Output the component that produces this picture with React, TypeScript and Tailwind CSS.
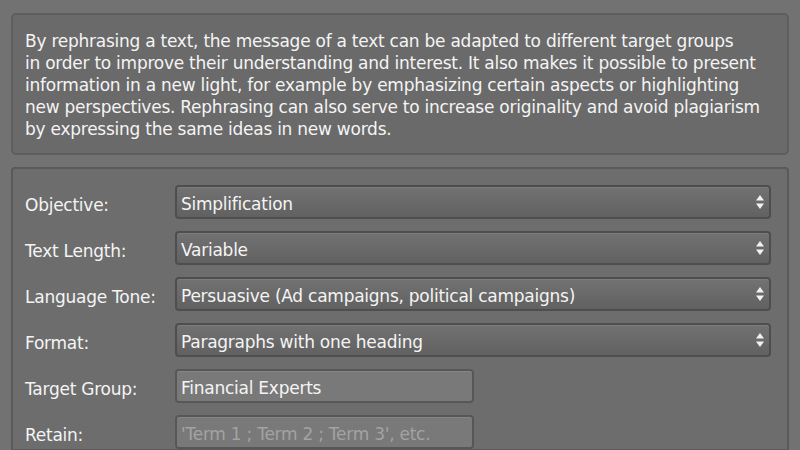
import React from 'react';

const fields = [
  { label: 'Objective:', value: 'Simplification', kind: 'select' },
  { label: 'Text Length:', value: 'Variable', kind: 'select' },
  { label: 'Language Tone:', value: 'Persuasive (Ad campaigns, political campaigns)', kind: 'select' },
  { label: 'Format:', value: 'Paragraphs with one heading', kind: 'select' },
  { label: 'Target Group:', value: 'Financial Experts', kind: 'input' },
  { label: 'Retain:', value: '', placeholder: "'Term 1 ; Term 2 ; Term 3', etc.", kind: 'input' },
];

const Spinner: React.FC = () => (
  <svg width="10" height="18" viewBox="0 0 10 18" className="shrink-0">
    <path d="M5 2 L9 7.5 H1 Z" fill="#f2f2f2" />
    <path d="M5 16 L9 10.5 H1 Z" fill="#f2f2f2" />
  </svg>
);

const App: React.FC = () => {
  return (
    <div
      className="w-[800px] h-[450px] overflow-hidden bg-[#727272] text-[#f4f4f4] pt-[13px] px-[11px] flex flex-col gap-[12px]"
      style={{ fontFamily: '"DejaVu Sans", Verdana, sans-serif' }}
    >
      <div className="bg-[#6a6a6a] border-2 border-[#5e5e5e] rounded-[5px] pl-[12px] pr-[8px] pt-[15px] pb-[13px] text-[17px] leading-[22px] tracking-[-0.25px] whitespace-nowrap">
        By rephrasing a text, the message of a text can be adapted to different target groups
        <br />
        in order to improve their understanding and interest. It also makes it possible to present
        <br />
        information in a new light, for example by emphasizing certain aspects or highlighting
        <br />
        new perspectives. Rephrasing can also serve to increase originality and avoid plagiarism
        <br />
        by expressing the same ideas in new words.
      </div>

      <div className="flex-1 bg-[#6d6d6d] border-2 border-[#5a5a5a] rounded-t-[4px] pl-[12px] pr-[16px] pt-[16px] flex flex-col gap-[12px] text-[17px] tracking-[-0.25px]">
        {fields.map((f) => (
          <div key={f.label} className="flex items-center h-[34px]">
            <div className="w-[150px] shrink-0 pt-[7px] whitespace-nowrap">{f.label}</div>
            {f.kind === 'select' ? (
              <div className="flex-1 h-[34px] flex items-center justify-between pl-[4px] pr-[4px] rounded-[4px] border-2 border-[#4e4e4e] bg-gradient-to-b from-[#727272] to-[#616161] shadow-[inset_0_1px_0_#7c7c7c]">
                <span className="pt-[5px]">{f.value}</span>
                <Spinner />
              </div>
            ) : (
              <div className="w-[299px] h-[34px] flex items-center pl-[4px] rounded-[4px] border-2 border-[#575757] bg-[#797979] shadow-[inset_0_1px_0_#858585]">
                {f.value ? (
                  <span className="pt-[5px]">{f.value}</span>
                ) : (
                  <span className="pt-[5px] text-[#a3a3a3]">{f.placeholder}</span>
                )}
              </div>
            )}
          </div>
        ))}
      </div>
    </div>
  );
};

export default App;
